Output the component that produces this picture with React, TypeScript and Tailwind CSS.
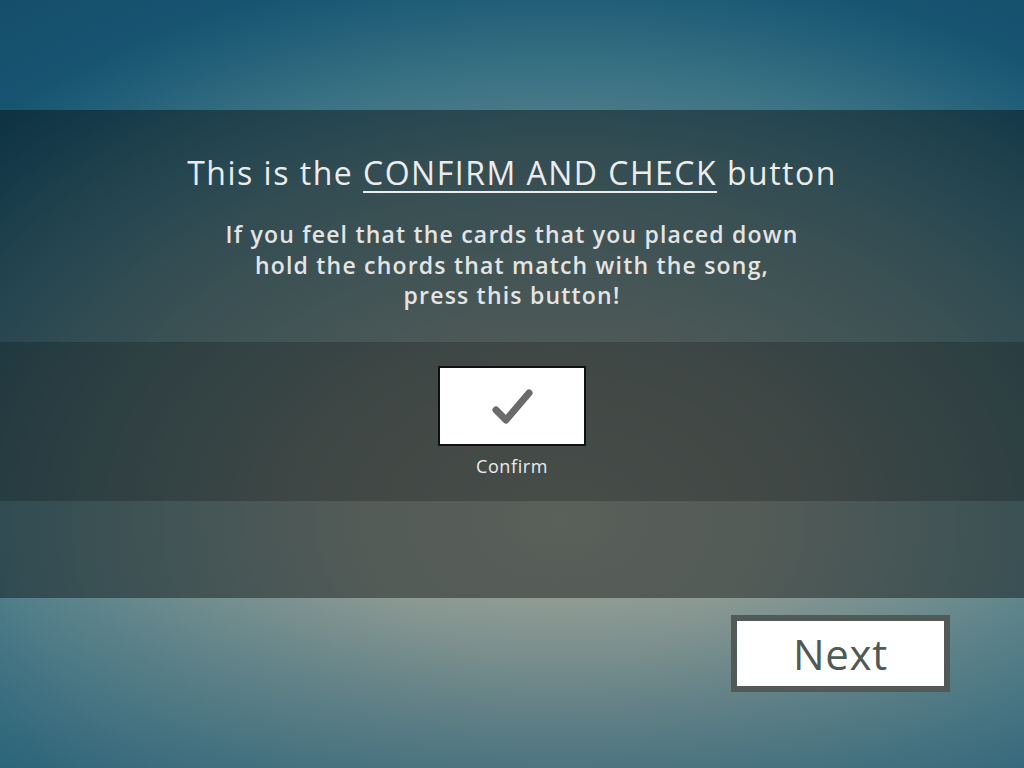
export default function App() {
  return (
    <main className="flex h-[768px] w-[1024px] flex-col overflow-hidden bg-[linear-gradient(to_bottom,rgba(20,75,100,0)_78%,rgba(30,85,110,0.45)_100%),radial-gradient(820px_560px_at_560px_520px,#96a096_0%,#8a9892_25%,#6e8c8e_48%,#55808a_66%,#3a7284_80%,#225f78_92%,#175470_100%,#134a68_125%)] font-['Open_Sans','Noto_Sans',sans-serif]">
      <div className="h-[110px] shrink-0" />

      <section className="flex h-[488px] shrink-0 flex-col bg-black/40">
        <div className="flex h-[232px] shrink-0 flex-col items-center pt-[41px]">
          <h1 className="text-[32px] leading-[44px] tracking-[1.5px] text-[#ececec]">
            This is the{" "}
            <span className="underline decoration-[2px] underline-offset-[6px]">CONFIRM AND CHECK</span>{" "}
            button
          </h1>
          <p className="mt-[24px] text-center text-[23px] font-semibold leading-[30.5px] tracking-[1.2px] text-[#e4e4e4]">
            If you feel that the cards that you placed down
            <br />
            hold the chords that match with the song,
            <br />
            press this button!
          </p>
        </div>

        <div className="flex h-[159px] shrink-0 flex-col items-center bg-black/20 pt-[24px]">
          <button className="flex h-[80px] w-[148px] items-center justify-center border-2 border-[#111] bg-white">
            <svg width="44" height="44" viewBox="0 0 44 44" fill="none">
              <path
                d="M6 26 L16 36 L39 9"
                stroke="#6b6b6b"
                strokeWidth="7"
                strokeLinecap="round"
                strokeLinejoin="round"
              />
            </svg>
          </button>
          <span className="mt-[8px] text-[18px] leading-[24px] tracking-[0.6px] text-[#ececec]">Confirm</span>
        </div>
      </section>

      <div className="flex flex-1 justify-end pr-[74px] pt-[17px]">
        <button className="flex h-[77px] w-[219px] items-center justify-center border-[6px] border-[#515a56] bg-white text-[42px] leading-none tracking-[0.75px] text-[#4f5a56]">
          Next
        </button>
      </div>
    </main>
  );
}
